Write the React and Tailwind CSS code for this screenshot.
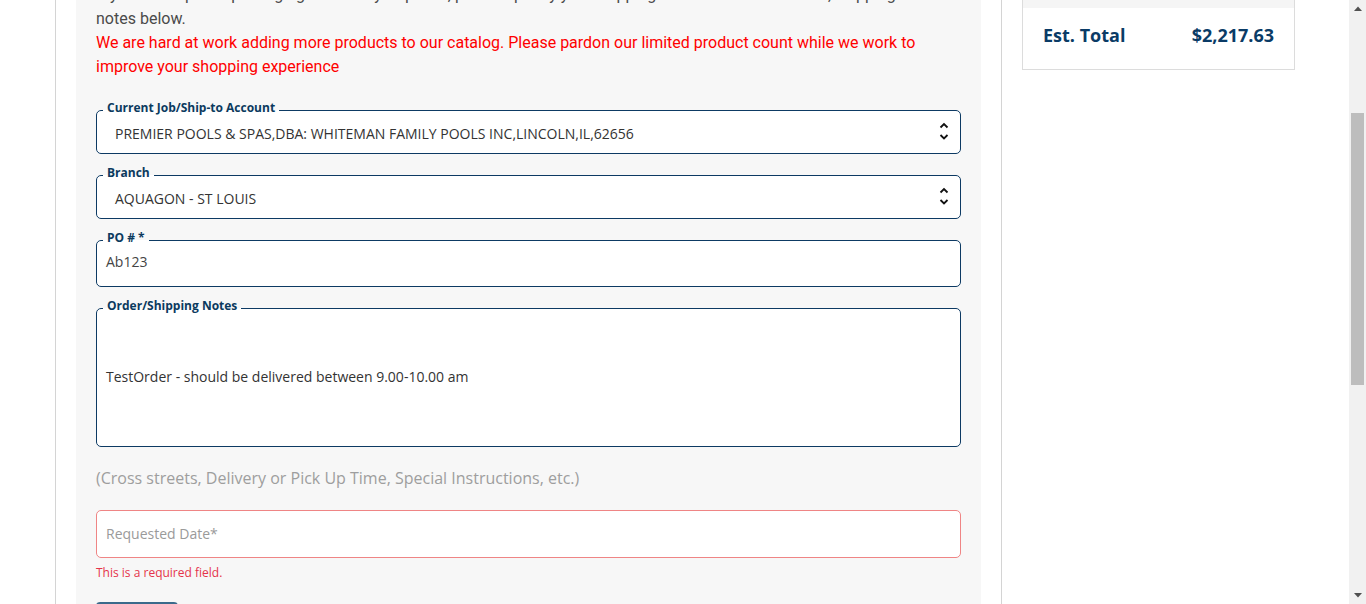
import React from "react";

const navy = "border-[#0d3a63]";

function Chevrons() {
  return (
    <svg width="10" height="20" viewBox="0 0 10 20" className="shrink-0">
      <polyline points="1.5,6.5 5,3 8.5,6.5" fill="none" stroke="#111" strokeWidth="1.8" />
      <polyline points="1.5,14 5,17.5 8.5,14" fill="none" stroke="#111" strokeWidth="1.8" />
    </svg>
  );
}

function Legend({ children }) {
  return (
    <legend className="ml-[6px] px-[4px] pb-[6px] text-[12px] leading-[15px] font-bold text-[#0b3a5e]">
      {children}
    </legend>
  );
}

export default function App() {
  return (
    <div className="h-[604px] w-[1366px] overflow-hidden flex bg-white" style={{ fontFamily: '"Open Sans", "Liberation Sans", sans-serif' }}>
      <div className="flex-1 flex pl-[55px]">
        {/* Left column */}
        <div className="w-[947px] border-x border-[#d4d4d4] px-[20px] h-full">
          <div className="bg-[#f7f7f7] h-full px-[20px] flex flex-col">
            <div className="shrink-0 -mt-[17px] text-[16px] leading-[24px]" style={{ fontFamily: 'Roboto, "Liberation Sans", sans-serif' }}>
              <p className="text-[#4a4a4a]">
                If you have special packaging or delivery requests, please specify your shipping instructions in the order, shipping
                <br />
                notes below.
              </p>
              <p className="text-[#ff0000]">
                We are hard at work adding more products to our catalog. Please pardon our limited product count while we work to improve your shopping experience
              </p>
            </div>

            <fieldset className={`shrink-0 mt-[21px] border ${navy} rounded-[5px] bg-white`}>
              <Legend>Current Job/Ship-to Account</Legend>
              <div className="h-[32px] pl-[18px] pr-[11px] flex items-start justify-between">
                <span className="mt-[3px] text-[14px] leading-[20px] text-[#333]">
                  PREMIER POOLS &amp; SPAS,DBA: WHITEMAN FAMILY POOLS INC,LINCOLN,IL,62656
                </span>
                <span><Chevrons /></span>
              </div>
            </fieldset>

            <fieldset className={`shrink-0 mt-[11px] border ${navy} rounded-[5px] bg-white`}>
              <Legend>Branch</Legend>
              <div className="h-[32px] pl-[18px] pr-[11px] flex items-start justify-between">
                <span className="mt-[3px] text-[14px] leading-[20px] text-[#333]">AQUAGON - ST LOUIS</span>
                <span><Chevrons /></span>
              </div>
            </fieldset>

            <fieldset className={`shrink-0 mt-[11px] border ${navy} rounded-[5px] bg-white`}>
              <Legend>PO # *</Legend>
              <div className="h-[35px] pl-[9px] pt-[1px] text-[14px] leading-[20px] text-[#444]">Ab123</div>
            </fieldset>

            <fieldset className={`shrink-0 mt-[11px] border ${navy} rounded-[5px] bg-white`}>
              <Legend>Order/Shipping Notes</Legend>
              <div className="h-[127px] pl-[9px] pt-[48px] text-[14px] leading-[20px] text-[#333]">
                TestOrder - should be delivered between 9.00-10.00 am
              </div>
            </fieldset>

            <p className="shrink-0 mt-[19px] text-[16px] leading-[24px] text-[#9e9e9e]">
              (Cross streets, Delivery or Pick Up Time, Special Instructions, etc.)
            </p>

            <div className="shrink-0 mt-[20px] h-[48px] border border-[#ef8585] rounded-[5px] bg-white flex items-center pl-[9px]">
              <span className="text-[14px] leading-[20px] text-[#9a9a9a]">Requested Date*</span>
            </div>

            <p className="shrink-0 mt-[7px] text-[12px] leading-[16px] text-[#e5334a]">This is a required field.</p>

            <div className="shrink-0 mt-[21px]">
              <button className="w-[82px] h-[38px] rounded-[4px] bg-[#3b6a8b] text-white text-[14px]">Submit</button>
            </div>
          </div>
        </div>

        {/* Right column */}
        <div className="pl-[20px]">
          <div className="w-[273px] border-x border-b border-[#dcdcdc]">
            <div className="h-[8px] bg-[#f5f5f5]" />
            <div className="px-[20px] pt-[13px] pb-[20px] flex justify-between text-[18px] leading-[28px] font-bold text-[#0a3b66]">
              <span>Est. Total</span>
              <span>$2,217.63</span>
            </div>
          </div>
        </div>
      </div>

      {/* Scrollbar */}
      <div className="w-[17px] h-full bg-[#f1f1f1] flex flex-col">
        <div className="h-[17px] flex items-center justify-center">
          <svg width="8" height="5" viewBox="0 0 8 5"><polygon points="0,5 4,0.5 8,5" fill="#505050" /></svg>
        </div>
        <div className="h-[96px]" />
        <div className="mx-[2px] h-[272px] bg-[#bdbdbd]" />
        <div className="flex-1" />
        <div className="h-[17px] flex items-center justify-center">
          <svg width="8" height="5" viewBox="0 0 8 5"><polygon points="0,0 8,0 4,4.5" fill="#505050" /></svg>
        </div>
      </div>
    </div>
  );
}
